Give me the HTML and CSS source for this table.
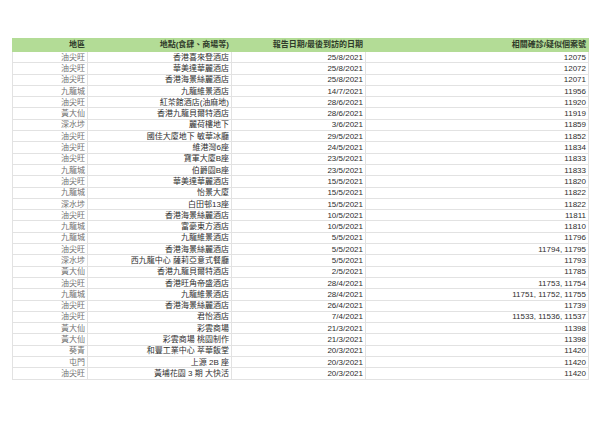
FILE: index.html
```html
<!DOCTYPE html>
<html lang="zh-Hant">
<head>
<meta charset="utf-8">
<link rel="stylesheet" href="styles.css">
</head>
<body>
<table class="cases">
<colgroup><col class="c1"><col class="c2"><col class="c3"><col class="c4"></colgroup>
<thead>
<tr><th>地區</th><th>地點(食肆、商場等)</th><th>報告日期/最後到訪的日期</th><th>相關確診/疑似個案號</th></tr>
</thead>
<tbody>
<tr><td class="d">油尖旺</td><td>香港喜來登酒店</td><td>25/8/2021</td><td>12075</td></tr>
<tr><td class="d">油尖旺</td><td>華美達華麗酒店</td><td>25/8/2021</td><td>12072</td></tr>
<tr><td class="d">油尖旺</td><td>香港海景絲麗酒店</td><td>25/8/2021</td><td>12071</td></tr>
<tr><td class="d">九龍城</td><td>九龍維景酒店</td><td>14/7/2021</td><td>11956</td></tr>
<tr><td class="d">油尖旺</td><td>紅茶館酒店(油麻地)</td><td>28/6/2021</td><td>11920</td></tr>
<tr><td class="d">黃大仙</td><td>香港九龍貝爾特酒店</td><td>28/6/2021</td><td>11919</td></tr>
<tr><td class="d">深水埗</td><td>麗荷樓地下</td><td>3/6/2021</td><td>11859</td></tr>
<tr><td class="d">油尖旺</td><td>國佳大廈地下 敏華冰廳</td><td>29/5/2021</td><td>11852</td></tr>
<tr><td class="d">油尖旺</td><td>維港灣6座</td><td>24/5/2021</td><td>11834</td></tr>
<tr><td class="d">油尖旺</td><td>寶軍大廈B座</td><td>23/5/2021</td><td>11833</td></tr>
<tr><td class="d">九龍城</td><td>伯爵園B座</td><td>23/5/2021</td><td>11833</td></tr>
<tr><td class="d">油尖旺</td><td>華美達華麗酒店</td><td>15/5/2021</td><td>11820</td></tr>
<tr><td class="d">九龍城</td><td>怡景大廈</td><td>15/5/2021</td><td>11822</td></tr>
<tr><td class="d">深水埗</td><td>白田邨13座</td><td>15/5/2021</td><td>11822</td></tr>
<tr><td class="d">油尖旺</td><td>香港海景絲麗酒店</td><td>10/5/2021</td><td>11811</td></tr>
<tr><td class="d">九龍城</td><td>富豪東方酒店</td><td>10/5/2021</td><td>11810</td></tr>
<tr><td class="d">九龍城</td><td>九龍維景酒店</td><td>5/5/2021</td><td>11796</td></tr>
<tr><td class="d">油尖旺</td><td>香港海景絲麗酒店</td><td>5/5/2021</td><td>11794, 11795</td></tr>
<tr><td class="d">深水埗</td><td>西九龍中心 薩莉亞意式餐廳</td><td>5/5/2021</td><td>11793</td></tr>
<tr><td class="d">黃大仙</td><td>香港九龍貝爾特酒店</td><td>2/5/2021</td><td>11785</td></tr>
<tr><td class="d">油尖旺</td><td>香港旺角帝盛酒店</td><td>28/4/2021</td><td>11753, 11754</td></tr>
<tr><td class="d">九龍城</td><td>九龍維景酒店</td><td>28/4/2021</td><td>11751, 11752, 11755</td></tr>
<tr><td class="d">油尖旺</td><td>香港海景絲麗酒店</td><td>26/4/2021</td><td>11739</td></tr>
<tr><td class="d">油尖旺</td><td>君怡酒店</td><td>7/4/2021</td><td>11533, 11536, 11537</td></tr>
<tr><td class="d">黃大仙</td><td>彩雲商場</td><td>21/3/2021</td><td>11398</td></tr>
<tr><td class="d">黃大仙</td><td>彩雲商場 桃園制作</td><td>21/3/2021</td><td>11398</td></tr>
<tr><td class="d">葵青</td><td>和豐工業中心 萃華飯堂</td><td>20/3/2021</td><td>11420</td></tr>
<tr><td class="d">屯門</td><td>上源 2B 座</td><td>20/3/2021</td><td>11420</td></tr>
<tr><td class="d">油尖旺</td><td>黃埔花園 3 期 大快活</td><td>20/3/2021</td><td>11420</td></tr>
</tbody>
</table>
</body>
</html>
```
FILE: styles.css
```css
html, body {
  margin: 0;
  background: #ffffff;
}
body {
  padding: 38px 0 0 12px;
  font-family: "Liberation Sans", "Noto Sans CJK TC", sans-serif;
  font-size: 8px;
  color: #2e2e2e;
}
.cases {
  border-collapse: collapse;
  table-layout: fixed;
  width: 576px;
}
.c1 { width: 75px; }
.c2 { width: 144px; }
.c3 { width: 134px; }
.c4 { width: 223px; }
.cases th {
  background: #b3dc96;
  height: 12px;
  padding: 0 2px;
  text-align: right;
  font-weight: bold;
  color: #2f3a2a;
  border: 1px solid #b3dc96;
  line-height: 10px;
}
.cases td {
  height: 10.3px;
  padding: 0 2px;
  text-align: right;
  border: 1px solid #e2e2e2;
  line-height: 9px;
  white-space: nowrap;
  overflow: hidden;
}
.cases td.d {
  font-family: "Liberation Serif", "Noto Sans CJK TC", serif;
  color: #707070;
  font-weight: normal;
}
```
